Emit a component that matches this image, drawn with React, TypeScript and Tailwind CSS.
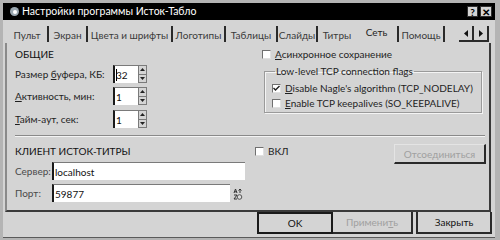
import React from "react";

const U = ({ children }: { children: React.ReactNode }) => <span className="underline underline-offset-[1px]">{children}</span>;

function Check({ checked = false }: { checked?: boolean }) {
  return (
    <span className="inline-flex w-[9px] h-[9px] shrink-0 bg-white border-t border-l border-[#707070] border-r border-b border-r-[#e0e0e0] border-b-[#e0e0e0] items-center justify-center">
      {checked && (
        <svg width="7" height="7" viewBox="0 0 7 7">
          <path d="M0.5 3 L2.5 5 L6.5 1" stroke="#202020" strokeWidth="1.4" fill="none" />
        </svg>
      )}
    </span>
  );
}

function Spinner({ value, caret = false }: { value: string; caret?: boolean }) {
  return (
    <div className="flex h-[18px] w-[34px]">
      <div className="flex-1 flex items-center bg-white border-l-2 border-l-[#1a1a1a] border-t border-t-[#7a7a7a] pl-[1px] text-[#111]">
        {caret && <span className="w-[1px] h-[12px] bg-black mr-[-1px]" />}
        <span>{value}</span>
      </div>
      <div className="w-[9px] flex flex-col border border-[#7a7a7a] bg-[#d4d4d4]">
        <div className="flex-1 flex items-center justify-center border-b border-[#7a7a7a]">
          <svg width="5" height="3" viewBox="0 0 5 3"><path d="M0 3 L2.5 0 L5 3 Z" fill="#222" /></svg>
        </div>
        <div className="flex-1 flex items-center justify-center">
          <svg width="5" height="3" viewBox="0 0 5 3"><path d="M0 0 L2.5 3 L5 0 Z" fill="#222" /></svg>
        </div>
      </div>
    </div>
  );
}

const tabs: { label: string; w: string; sep: boolean; active?: boolean }[] = [
  { label: "Пульт", w: "w-[42px]", sep: true },
  { label: "Экран", w: "w-[39px]", sep: true },
  { label: "Цвета и шрифты", w: "w-[85px]", sep: true },
  { label: "Логотипы", w: "w-[53px]", sep: true },
  { label: "Таблицы", w: "w-[52px]", sep: true },
  { label: "Слайды", w: "w-[40px]", sep: true },
  { label: "Титры", w: "w-[38px]", sep: false },
  { label: "Сеть", w: "w-[43px]", sep: true, active: true },
  { label: "Помощь", w: "w-[46px]", sep: true },
];

export default function App() {
  return (
    <div className="w-[500px] h-[240px] bg-[#b4b4b4] pl-[3px] pr-[5px] pt-[3px] pb-[2px] font-['Lato','Liberation_Sans',sans-serif] text-[10px] leading-[14px] text-[#1e1e1e] overflow-hidden whitespace-nowrap">
      <div className="h-full flex flex-col bg-[#d4d4d4] border-b border-b-[#5a5a5a]">
        {/* title bar */}
        <div className="h-[17px] bg-black flex items-center pl-[7px] pr-[3px]">
          <span className="w-[9px] h-[9px] rounded-full bg-[#9aa7b0] flex items-center justify-center">
            <span className="w-[4px] h-[4px] rounded-full bg-white" />
          </span>
          <span className="ml-[3px] text-white text-[10.5px] leading-[17px]">Настройки программы Исток-Табло</span>
          <div className="ml-auto flex gap-[2px]">
            <span className="w-[11px] h-[11px] bg-[#d4d4d4] border border-[#303030] flex items-center justify-center text-[10px] leading-none font-bold text-black">?</span>
            <span className="w-[12px] h-[11px] bg-[#d4d4d4] border border-[#303030] flex items-center justify-center text-[10px] leading-none font-bold text-black">✕</span>
          </div>
        </div>

        {/* tabs */}
        <div className="h-[23px] flex items-start pl-[4px] pr-[5px] pt-[6px]">
          {tabs.map((t) => (
            <div key={t.label} className={`${t.w} h-[16px] flex items-center justify-center text-[#3a3a3a] ${t.sep ? "border-r-2 border-r-[#2a2a2a]" : ""}`}>
              <span className={t.active ? "-mt-[4px] text-[#222]" : "mt-[2px]"}>{t.label}</span>
            </div>
          ))}
          <div className="ml-auto mr-[1px] w-[30px] h-[16px] flex border-b-2 border-b-[#2a2a2a] border-r-2 border-r-[#2a2a2a]">
            <span className="flex-1 flex items-center justify-center border-r-2 border-r-[#2a2a2a]">
              <svg width="4" height="7" viewBox="0 0 4 7"><path d="M4 0 L0 3.5 L4 7 Z" fill="#111" /></svg>
            </span>
            <span className="flex-1 flex items-center justify-center">
              <svg width="4" height="7" viewBox="0 0 4 7"><path d="M0 0 L4 3.5 L0 7 Z" fill="#111" /></svg>
            </span>
          </div>
        </div>

        {/* panel */}
        <div className="h-[169px] ml-[2px] mr-[4px] border-l-2 border-l-[#8a8a8a] border-r-2 border-r-[#3a3a3a] border-b-2 border-b-[#3a3a3a] flex flex-col">
          <div className="h-[86px] flex">
            <div className="w-[254px] pl-[8px] flex flex-col">
              <div className="mt-[4px] h-[14px] text-[#111]">ОБЩИЕ</div>
              <div className="mt-[4px] h-[18px] flex items-center">
                <span className="w-[98px]">Размер <U>б</U>уфера, КБ:</span>
                <Spinner value="32" caret />
              </div>
              <div className="mt-[4px] h-[18px] flex items-center">
                <span className="w-[98px]"><U>А</U>ктивность, мин:</span>
                <Spinner value="1" />
              </div>
              <div className="mt-[5px] h-[18px] flex items-center">
                <span className="w-[98px]"><U>Т</U>айм-аут, сек:</span>
                <Spinner value="1" />
              </div>
            </div>
            <div className="flex-1 flex flex-col pr-[6px]">
              <div className="mt-[4px] h-[14px] flex items-center gap-[4px] pl-[1px]">
                <Check />
                <span><U>А</U>синхронное сохранение</span>
              </div>
              <fieldset className="mt-[3px] ml-[3px] mr-[1px] border border-[#9a9a9a] shadow-[inset_1px_1px_0_#f4f4f4,1px_1px_0_#f4f4f4] pl-[7px] pb-[2px]">
                <legend className="ml-[3px] px-[1px] text-[#222]">Low-level TCP connection flags</legend>
                <div className="mt-[3px] h-[14px] flex items-center gap-[4px]">
                  <Check checked />
                  <span><U>D</U>isable Nagle's algorithm (TCP_NODELAY)</span>
                </div>
                <div className="mt-[1px] h-[14px] flex items-center gap-[4px]">
                  <Check />
                  <span><U>E</U>nable TCP keepalives (SO_KEEPALIVE)</span>
                </div>
              </fieldset>
            </div>
          </div>

          <div className="ml-[8px] mr-[4px] mt-[6px] h-[2px] border-t border-t-[#8a8a8a] border-b border-b-[#f4f4f4]" />

          <div className="flex">
            <div className="pl-[8px] flex flex-col flex-1">
              <div className="mt-[7px] h-[14px] flex items-center">
                <span className="w-[240px] text-[#111]">КЛИЕНТ ИСТОК-ТИТРЫ</span>
                <Check />
                <span className="ml-[4px]">ВКЛ</span>
              </div>
              <div className="mt-[4px] h-[18px] flex items-center">
                <span className="w-[37px] text-[#4a4a4a]">Сервер:</span>
                <div className="w-[193px] h-[18px] bg-white border-l-2 border-l-[#1a1a1a] border-t border-t-[#7a7a7a] flex items-center pl-[1px] text-[#111]">localhost</div>
              </div>
              <div className="mt-[4px] h-[18px] flex items-center">
                <span className="w-[37px] text-[#4a4a4a]">Порт:</span>
                <div className="w-[178px] h-[18px] bg-white border-l-2 border-l-[#1a1a1a] border-t border-t-[#7a7a7a] flex items-center pl-[1px] text-[#111]">59877</div>
                <svg className="ml-[3px] mt-[2px]" width="10" height="12" viewBox="0 0 10 12">
                  <path d="M1 5 L2.5 1 L4 5 M1.5 3.8 H3.5" stroke="#333" strokeWidth="1" fill="none" />
                  <path d="M7 1 V5 M5.5 2.5 L7 1 L8.5 2.5" stroke="#333" strokeWidth="1" fill="none" />
                  <circle cx="6.5" cy="9" r="2.3" stroke="#555" strokeWidth="1" fill="#ddd" />
                  <path d="M1 7 H4 L1 11 H4" stroke="#333" strokeWidth="1" fill="none" />
                </svg>
              </div>
            </div>
            <button className="mt-[7px] mr-[3px] w-[92px] h-[20px] border-t border-l border-[#e4e4e4] border-r-2 border-b-2 border-r-[#2a2a2a] border-b-[#2a2a2a] text-[#a0a0a0] flex items-center justify-center">
              Отсоединиться
            </button>
          </div>
        </div>

        {/* bottom buttons */}
        <div className="flex justify-end pr-[3px]">
          <button className="w-[76px] h-[22px] border-2 border-[#1a1a1a] flex items-center justify-center text-[#111]">OK</button>
          <button className="w-[80px] h-[22px] border-r-2 border-b-2 border-[#2a2a2a] flex items-center justify-center text-[#a0a0a0]">Примени<U>т</U>ь</button>
          <button className="ml-[3px] w-[76px] h-[22px] border-l-2 border-r-2 border-b-2 border-[#2a2a2a] flex items-center justify-center text-[#111]">Закрыть</button>
        </div>
      </div>
    </div>
  );
}
